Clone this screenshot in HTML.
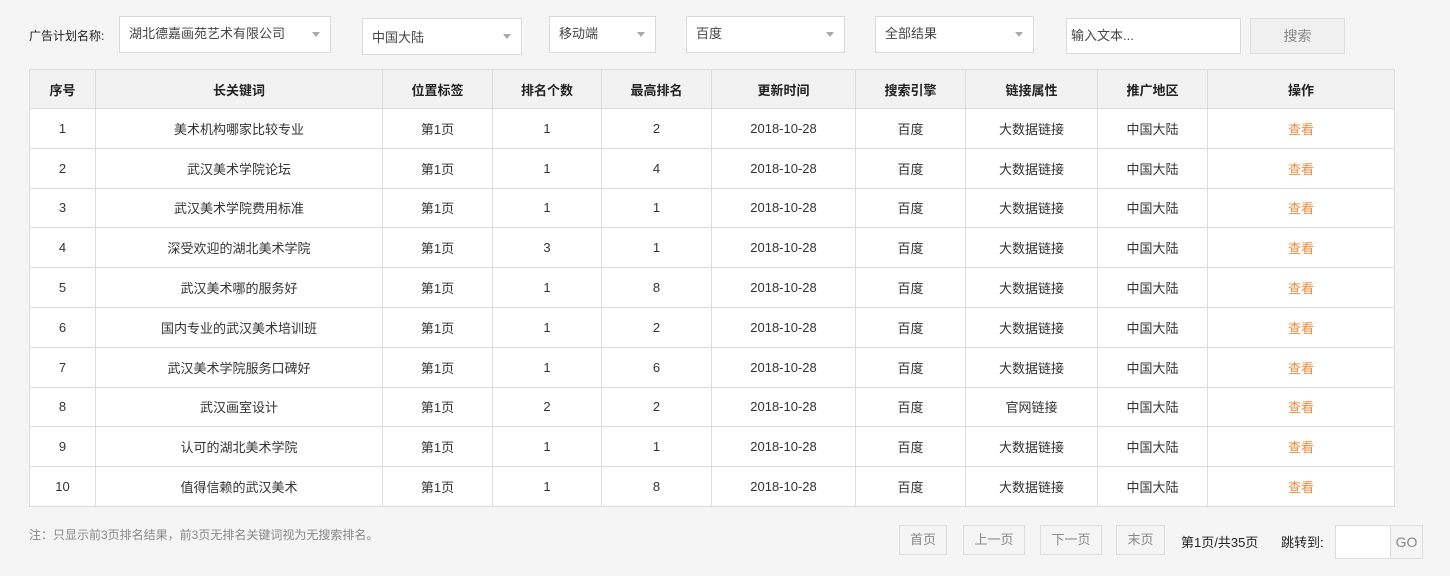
<!DOCTYPE html>
<html><head><meta charset="utf-8"><style>
*{box-sizing:border-box;margin:0;padding:0}
body{width:1450px;height:576px;background:#f5f5f5;font-family:"Liberation Sans","Noto Sans CJK SC",sans-serif;font-size:13px;color:#333;position:relative;overflow:hidden}
.a{position:absolute}
.sel{position:absolute;background:#fff;border:1px solid #d9d9d9;padding-left:9px;line-height:34px;font-size:13px;color:#444}
.sel:after{content:"";position:absolute;right:10px;top:15px;border-left:4px solid transparent;border-right:4px solid transparent;border-top:5px solid #aaa}
table{position:absolute;left:29px;top:69px;border-collapse:collapse;background:#fff}
td,th{border:1px solid #dcdcdc;text-align:center;height:39.8px;font-size:13px;color:#333;font-weight:normal;padding:0}
th{background:#f2f2f2;height:39px;font-weight:bold;color:#222}
td.o{color:#f08a3c}
.pb{position:absolute;top:525px;height:30px;border:1px solid #ddd;color:#888;text-align:center;line-height:28px;font-size:13px}
</style></head><body>
<div class="a" style="left:29px;top:27px;font-size:12px;color:#222">广告计划名称:</div>
<div class="sel" style="left:119px;top:16px;width:212px;height:37px">湖北德嘉画苑艺术有限公司</div>
<div class="sel" style="left:362px;top:18px;width:160px;height:37px;line-height:38px">中国大陆</div>
<div class="sel" style="left:549px;top:16px;width:107px;height:37px">移动端</div>
<div class="sel" style="left:686px;top:16px;width:159px;height:37px">百度</div>
<div class="sel" style="left:875px;top:16px;width:159px;height:37px">全部结果</div>
<div class="a" style="left:1066px;top:18px;width:175px;height:36px;background:#fff;border:1px solid #d9d9d9;padding-left:4px;line-height:34px;color:#444">输入文本...</div>
<div class="a" style="left:1250px;top:18px;width:95px;height:36px;background:#f0f0f0;border:1px solid #ddd;text-align:center;line-height:34px;color:#888;font-size:14px">搜索</div>
<table>
<tr><th style="width:66px">序号</th><th style="width:287px">长关键词</th><th style="width:110px">位置标签</th><th style="width:109px">排名个数</th><th style="width:110px">最高排名</th><th style="width:144px">更新时间</th><th style="width:110px">搜索引擎</th><th style="width:132px">链接属性</th><th style="width:110px">推广地区</th><th style="width:187px">操作</th></tr>
<tr><td>1</td><td>美术机构哪家比较专业</td><td>第1页</td><td>1</td><td>2</td><td>2018-10-28</td><td>百度</td><td>大数据链接</td><td>中国大陆</td><td class="o">查看</td></tr>
<tr><td>2</td><td>武汉美术学院论坛</td><td>第1页</td><td>1</td><td>4</td><td>2018-10-28</td><td>百度</td><td>大数据链接</td><td>中国大陆</td><td class="o">查看</td></tr>
<tr><td>3</td><td>武汉美术学院费用标准</td><td>第1页</td><td>1</td><td>1</td><td>2018-10-28</td><td>百度</td><td>大数据链接</td><td>中国大陆</td><td class="o">查看</td></tr>
<tr><td>4</td><td>深受欢迎的湖北美术学院</td><td>第1页</td><td>3</td><td>1</td><td>2018-10-28</td><td>百度</td><td>大数据链接</td><td>中国大陆</td><td class="o">查看</td></tr>
<tr><td>5</td><td>武汉美术哪的服务好</td><td>第1页</td><td>1</td><td>8</td><td>2018-10-28</td><td>百度</td><td>大数据链接</td><td>中国大陆</td><td class="o">查看</td></tr>
<tr><td>6</td><td>国内专业的武汉美术培训班</td><td>第1页</td><td>1</td><td>2</td><td>2018-10-28</td><td>百度</td><td>大数据链接</td><td>中国大陆</td><td class="o">查看</td></tr>
<tr><td>7</td><td>武汉美术学院服务口碑好</td><td>第1页</td><td>1</td><td>6</td><td>2018-10-28</td><td>百度</td><td>大数据链接</td><td>中国大陆</td><td class="o">查看</td></tr>
<tr><td>8</td><td>武汉画室设计</td><td>第1页</td><td>2</td><td>2</td><td>2018-10-28</td><td>百度</td><td>官网链接</td><td>中国大陆</td><td class="o">查看</td></tr>
<tr><td>9</td><td>认可的湖北美术学院</td><td>第1页</td><td>1</td><td>1</td><td>2018-10-28</td><td>百度</td><td>大数据链接</td><td>中国大陆</td><td class="o">查看</td></tr>
<tr><td>10</td><td>值得信赖的武汉美术</td><td>第1页</td><td>1</td><td>8</td><td>2018-10-28</td><td>百度</td><td>大数据链接</td><td>中国大陆</td><td class="o">查看</td></tr>
</table>
<div class="a" style="left:29px;top:526px;font-size:12px;color:#888">注：只显示前3页排名结果，前3页无排名关键词视为无搜索排名。</div>
<div class="pb" style="left:899px;width:48px">首页</div>
<div class="pb" style="left:963px;width:62px">上一页</div>
<div class="pb" style="left:1040px;width:62px">下一页</div>
<div class="pb" style="left:1116px;width:49px">末页</div>
<div class="a" style="left:1181px;top:532px;color:#222">第1页/共35页</div>
<div class="a" style="left:1281px;top:532px;color:#222">跳转到:</div>
<div class="a" style="left:1335px;top:525px;width:56px;height:34px;background:#fff;border:1px solid #ddd"></div>
<div class="a" style="left:1390px;top:525px;width:33px;height:34px;border:1px solid #ddd;text-align:center;line-height:32px;color:#888;font-size:14px">GO</div>
</body></html>
